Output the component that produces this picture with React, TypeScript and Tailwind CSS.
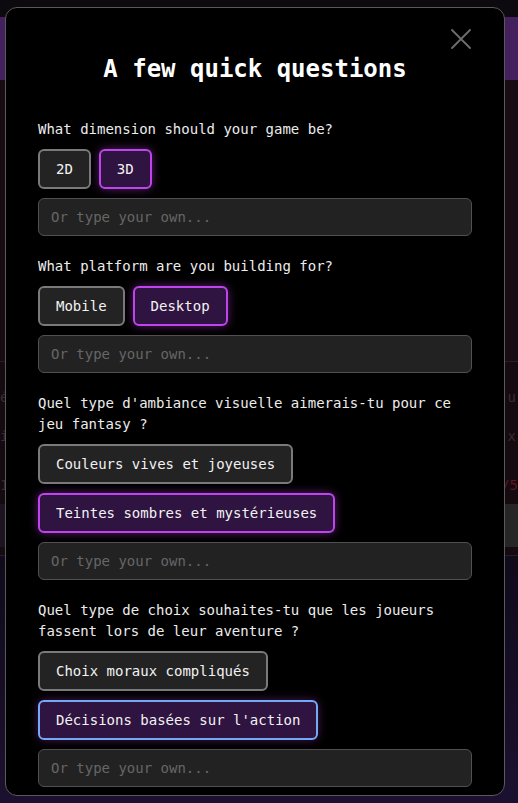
import React from "react";

type Opt = { label: string; state?: "selected" | "focused" };
type Q = { q: string; opts: Opt[] };

const questions: Q[] = [
  { q: "What dimension should your game be?", opts: [{ label: "2D" }, { label: "3D", state: "selected" }] },
  { q: "What platform are you building for?", opts: [{ label: "Mobile" }, { label: "Desktop", state: "selected" }] },
  {
    q: "Quel type d'ambiance visuelle aimerais-tu pour ce jeu fantasy ?",
    opts: [{ label: "Couleurs vives et joyeuses" }, { label: "Teintes sombres et mystérieuses", state: "selected" }],
  },
  {
    q: "Quel type de choix souhaites-tu que les joueurs fassent lors de leur aventure ?",
    opts: [{ label: "Choix moraux compliqués" }, { label: "Décisions basées sur l'action", state: "focused" }],
  },
];

function OptionButton({ opt }: { opt: Opt }) {
  const base =
    "h-10 px-4 rounded-md border-2 text-[14px] leading-5 text-[#f2f2f2] whitespace-nowrap";
  if (opt.state === "selected") {
    return (
      <button className={`${base} bg-[#2f1340] border-[#c044ee] shadow-[0_0_10px_rgba(192,68,238,0.45)]`}>
        {opt.label}
      </button>
    );
  }
  if (opt.state === "focused") {
    return (
      <button className={`${base} bg-[#2f1340] border-[#74a9f7] shadow-[0_0_10px_rgba(192,68,238,0.35)]`}>
        {opt.label}
      </button>
    );
  }
  return <button className={`${base} bg-[#232323] border-[#7a7a7a]`}>{opt.label}</button>;
}

function Question({ q }: { q: Q }) {
  return (
    <div className="flex flex-col gap-[9px]">
      <p className="text-[14px] leading-[21px] text-[#ececec]">{q.q}</p>
      <div className="flex flex-wrap gap-x-2 gap-y-[9px]">
        {q.opts.map((o) => (
          <OptionButton key={o.label} opt={o} />
        ))}
      </div>
      <input
        className="h-[38px] w-full rounded-md border border-[#505050] bg-[#222222] px-3 text-[14px] text-[#ececec] placeholder:text-[#666666] outline-none"
        placeholder="Or type your own..."
      />
    </div>
  );
}

export default function App() {
  return (
    <div className="relative h-[803px] w-[518px] overflow-hidden bg-[#0c0a0e] font-['DejaVu_Sans_Mono',monospace]">
      {/* background page (dimmed) */}
      <div className="flex h-full flex-col">
        <div className="h-[17px] bg-[#0c0a0e]" />
        <div className="h-[63px] bg-[#44205e]" />
        <div className="h-[282px] bg-[#180b13] border-b border-[#2c1d25]" />
        <div className="relative flex h-[194px] flex-col bg-[#140a10] border-b border-[#2a1c28]">
          <div className="flex justify-between px-0 pt-[25px] text-[14px] text-[#3a2c34]">
            <span>é</span>
            <span className="tracking-[2px]">eu</span>
          </div>
          <div className="flex justify-between pt-[18px] text-[14px] text-[#3a2c34]">
            <span>i</span>
            <span className="tracking-[2px]">ux</span>
          </div>
          <div className="flex justify-between pt-[28px] text-[14px]">
            <span className="text-[#3a2c34]">1</span>
            <span className="text-[#5a1a22]">/5</span>
          </div>
          <div className="mt-auto flex h-[43px] justify-between">
            <div className="w-[8px] bg-[#1d1422]" />
            <div className="w-[20px] bg-[#262626]" />
          </div>
          <div className="h-[8px]" />
        </div>
        <div className="flex-1 bg-gradient-to-b from-[#100a1a] to-[#1c1030]" />
      </div>

      {/* modal */}
      <div className="absolute left-[5px] top-[7px] h-[789px] w-[500px] overflow-hidden rounded-[12px] border border-[#5a5a5a] bg-black px-8 pt-[45px] pb-2">
        <button className="absolute left-[445px] top-[21px] h-[20px] w-[20px]" aria-label="Close">
          <svg width="20" height="20" viewBox="0 0 20 20" fill="none">
            <path d="M1 1L19 19M19 1L1 19" stroke="#6e6e6e" strokeWidth="1.8" strokeLinecap="round" />
          </svg>
        </button>
        <h2 className="text-center text-[24px] font-bold leading-8 text-white">A few quick questions</h2>
        <div className="mt-[34px] flex flex-col gap-5">
          {questions.map((q) => (
            <Question key={q.q} q={q} />
          ))}
        </div>
      </div>
    </div>
  );
}
